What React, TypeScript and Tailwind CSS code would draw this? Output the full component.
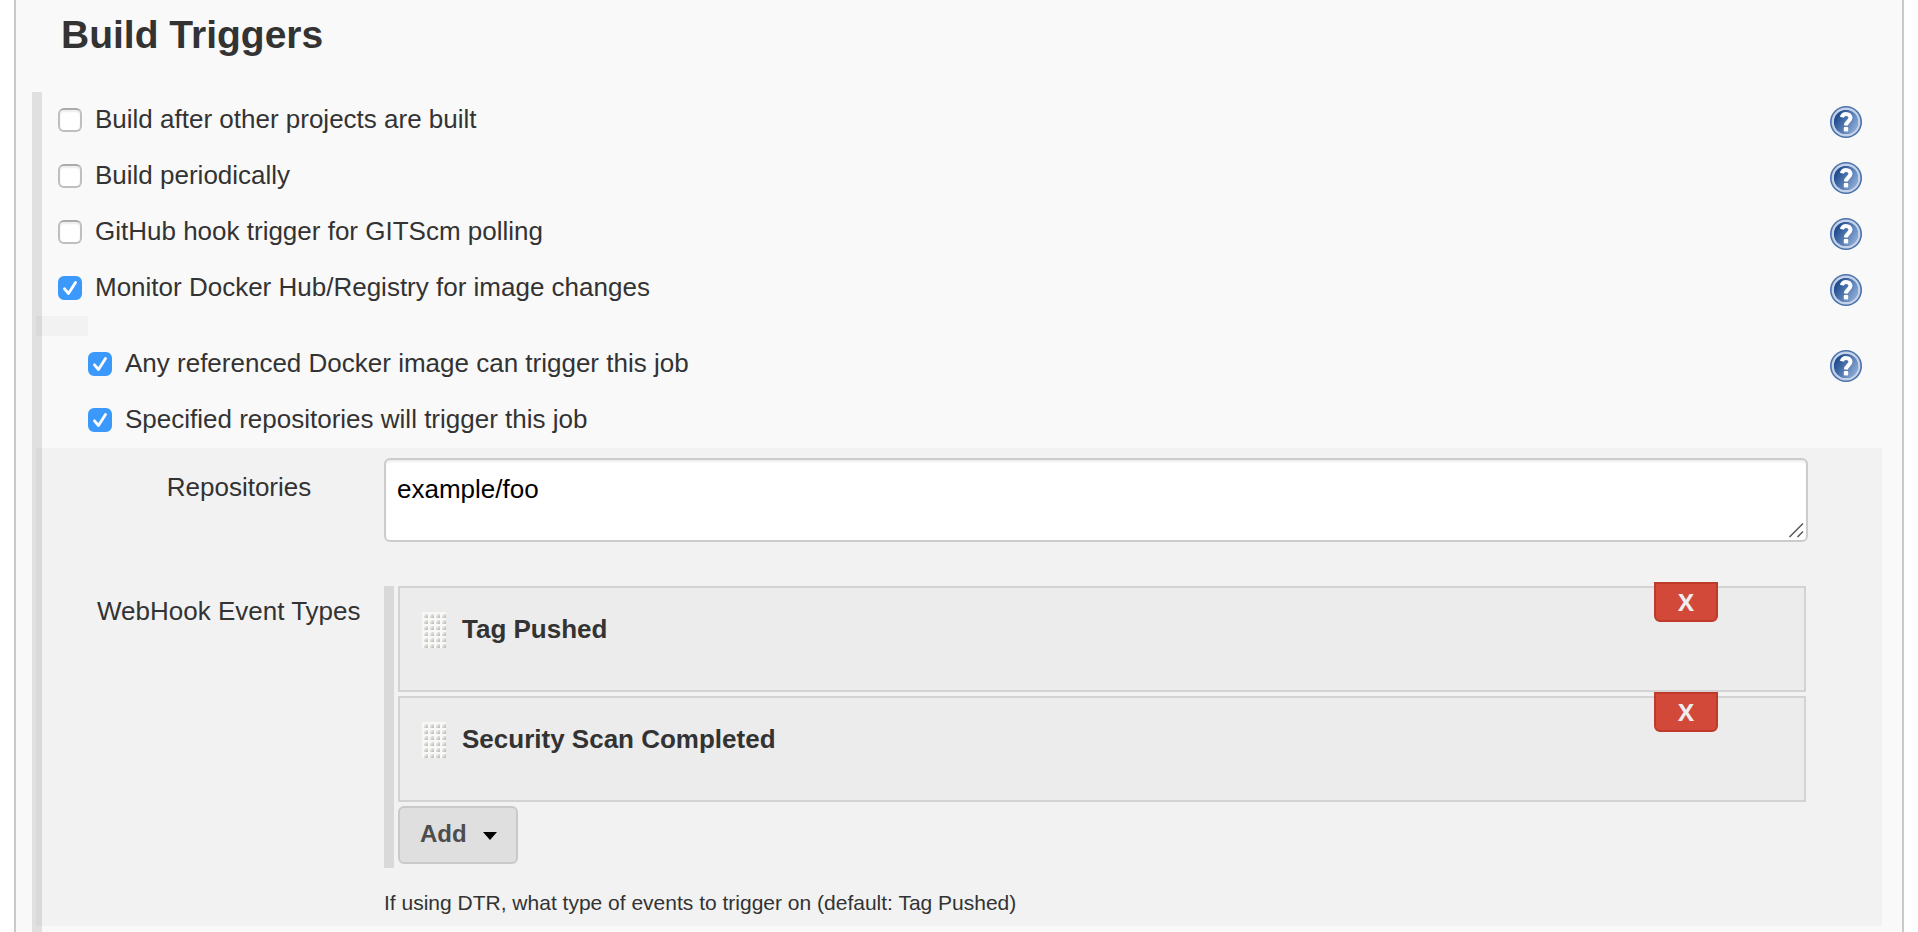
import React from "react";

function HelpIcon() {
  return (
    <svg viewBox="0 0 32 32" className="size-8" aria-hidden="true">
      <defs>
        <linearGradient id="helpFill" x1="0" y1="0.2" x2="1" y2="0.8">
          <stop offset="0.1" stopColor="#1f4b8e" />
          <stop offset="0.9" stopColor="#86a6d2" />
        </linearGradient>
      </defs>
      <circle cx="16" cy="16" r="16" fill="#4a72ab" />
      <circle cx="16" cy="16" r="13.2" fill="none" stroke="#c3d2e8" strokeWidth="2.4" />
      <circle cx="16" cy="16" r="12" fill="url(#helpFill)" />
      <path d="M11.800 11.200c.6-2.200 2.200-3.200 4.200-3.200 2.700 0 4.500 1.500 4.500 3.800 0 3.300-4.500 3.600-4.500 7.600" fill="none" stroke="#fff" strokeWidth="4" />
      <rect x="13.800" y="21" width="4.400" height="4.600" rx="1" fill="#fff" />
    </svg>
  );
}

function HelpButton({ topic }: { topic: string }) {
  return (
    <button type="button" aria-label={"Help for " + topic} className="mt-3.5 size-8 shrink-0 cursor-pointer">
      <HelpIcon />
    </button>
  );
}

type OptionProps = { id: string; label: string; checked?: boolean; nested?: boolean; help?: boolean };

function Option({ id, label, checked = false, nested = false, help = true }: OptionProps) {
  return (
    <div className={"flex h-14 items-start pr-5 " + (nested ? "pl-[46px]" : "pl-4")}>
      <span className="relative mt-4 size-6 shrink-0">
        <input
          id={id}
          type="checkbox"
          defaultChecked={checked}
          className="peer block size-6 appearance-none rounded-md border-2 border-[#bfbfbf] border-t-[#ababab] bg-white shadow-[inset_0_2px_2px_rgba(0,0,0,0.07)] checked:border-[#3b99fc] checked:bg-[#3b99fc] checked:shadow-none"
        />
        <svg viewBox="0 0 24 24" className="pointer-events-none absolute inset-0 hidden size-6 peer-checked:block" aria-hidden="true">
          <path d="M6.500 12.800l4 4.700L17.500 6.500" fill="none" stroke="#fff" strokeWidth="2.800" strokeLinecap="round" strokeLinejoin="round" />
        </svg>
      </span>
      <label htmlFor={id} className="mt-3 ml-[13px] grow leading-[30px]">{label}</label>
      {help && <HelpButton topic={label} />}
    </div>
  );
}

function Grip() {
  return (
    <svg width="24" height="36" className="shrink-0 cursor-move" aria-hidden="true">
      <defs>
        <pattern id="gripDots" width="6" height="6" patternUnits="userSpaceOnUse">
          <rect width="6" height="6" fill="#f8f8f7" />
          <path d="M2 6V4l2-2h2v4z" fill="#dcdcd9" />
          <path d="M3 6l3-3v3z" fill="#c2c2be" />
        </pattern>
      </defs>
      <rect width="24" height="36" fill="url(#gripDots)" />
    </svg>
  );
}

function EventCard({ name }: { name: string }) {
  return (
    <li className="relative flex h-[106px] items-start border-2 border-[#d3d3d3] bg-[#ececec] pt-6 pl-[22px]">
      <Grip />
      <span className="ml-4 font-bold leading-[34px]">{name}</span>
      <button
        type="button"
        aria-label={"Delete " + name}
        className="absolute -top-1.5 right-[86px] h-10 w-16 rounded-b-md border-2 border-[#c03a2b] bg-[#d24939] text-center font-['Open_Sans',sans-serif] text-2xl leading-8 font-bold text-[#eee]"
      >
        X
      </button>
    </li>
  );
}

export default function App() {
  return (
    <div className="min-h-screen bg-white px-3.5 font-['Liberation_Sans',Arial,sans-serif] text-[26px] text-[#333]">
      <main className="min-h-screen border-x-2 border-[#c9c9c9] bg-[#f9f9f9] pr-5 pl-4">
        <h2 className="h-[92px] pt-[13px] pl-[29px] text-[39px] leading-[44px] font-bold">Build Triggers</h2>
        <section className="min-h-[840px] border-l-10 border-[#e0e0e0]">
          <Option id="after" label="Build after other projects are built" />
          <Option id="periodic" label="Build periodically" />
          <Option id="github" label="GitHub hook trigger for GITScm polling" />
          <Option id="registry" label="Monitor Docker Hub/Registry for image changes" checked />
          <div className="-ml-1.5 h-5 w-[52px] bg-black/[0.028]" />
          <Option id="any" label="Any referenced Docker image can trigger this job" checked nested />
          <Option id="specified" label="Specified repositories will trigger this job" checked nested help={false} />

          <div className="-ml-1.5 bg-black/[0.028] pt-2.5 pr-[74px] pb-2 pl-[60px]">
            <div className="grid grid-cols-[288px_minmax(0,1fr)]">
              <label htmlFor="repositories" className="pt-3.5 pr-0.5 text-center leading-[30px]">Repositories</label>
              <div className="relative mb-11">
                <textarea
                  id="repositories"
                  defaultValue="example/foo"
                  className="block h-[84px] w-full resize-y rounded-md border-2 border-[#ccc] bg-white px-[11px] py-3.5 leading-[30px] text-black shadow-[inset_0_2px_2px_rgba(0,0,0,0.07)] [&::-webkit-resizer]:hidden"
                />
                <svg width="16" height="16" viewBox="0 0 16 16" className="pointer-events-none absolute right-1 bottom-1 size-4" aria-hidden="true">
                  <path d="M1.500 15L15 1.500M9.500 15L15 9.500" fill="none" stroke="#555" strokeWidth="1.500" />
                </svg>
              </div>
              <span id="events-label" className="pt-2.5 pl-px leading-[30px]">WebHook Event Types</span>
              <div className="mr-0.5 border-l-10 border-[#d9d9d9] pb-1 pl-1">
                <ul aria-labelledby="events-label" className="flex flex-col gap-1">
                  <EventCard name="Tag Pushed" />
                  <EventCard name="Security Scan Completed" />
                </ul>
                <button
                  type="button"
                  className="mt-1 flex h-[58px] w-[120px] items-center rounded-md border-2 border-[#c9c9c9] bg-[#dfdfdf] pb-0.5 pl-5 text-2xl font-bold text-[#4d4d4d]"
                >
                  Add
                  <svg width="14" height="8" viewBox="0 0 14 8" className="mt-1 ml-4 shrink-0" aria-hidden="true">
                    <path d="M0 0h14L7 8z" fill="#000" />
                  </svg>
                </button>
              </div>
              <p className="col-start-2 pt-5 text-[21px] leading-[30px]">
                If using DTR, what type of events to trigger on (default: Tag Pushed)
              </p>
            </div>
          </div>
        </section>
      </main>
    </div>
  );
}
